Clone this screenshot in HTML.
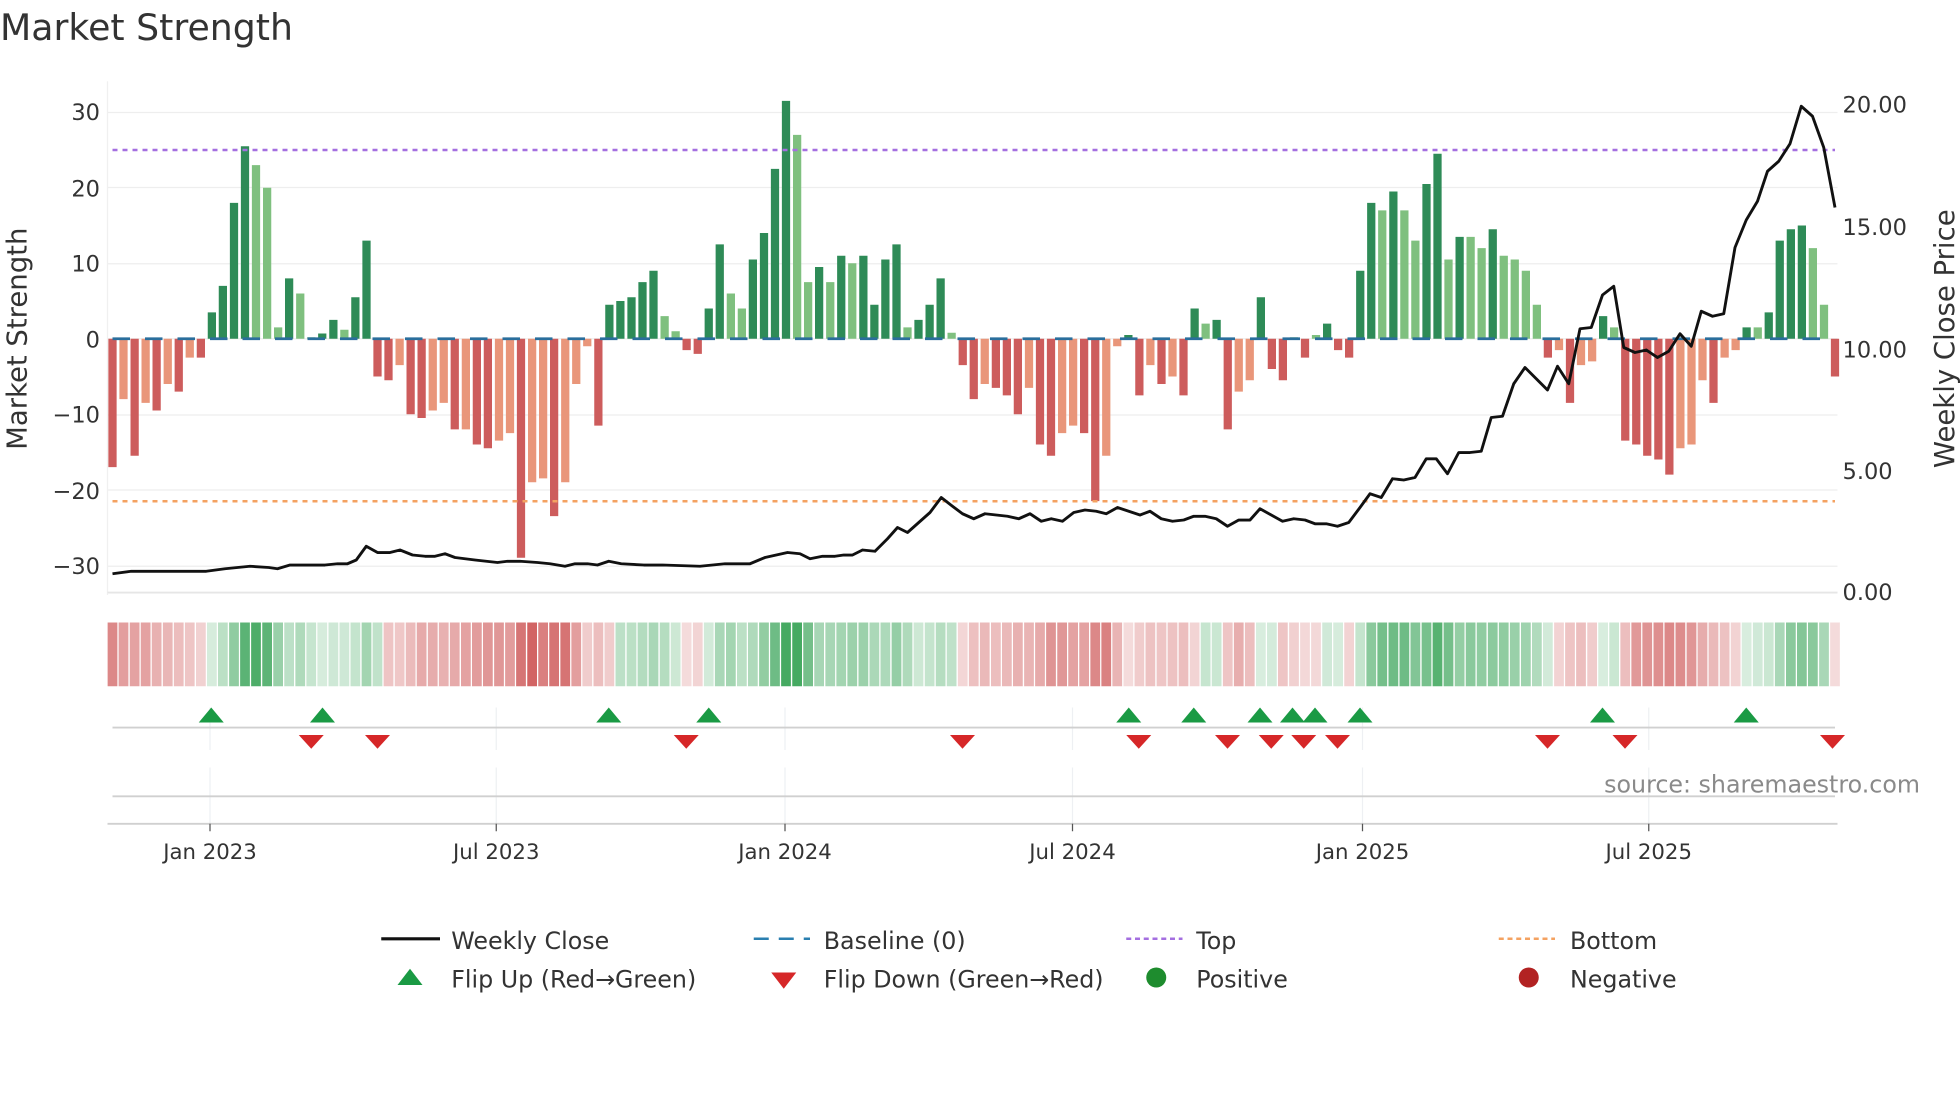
<!DOCTYPE html>
<html><head><meta charset="utf-8"><style>
html,body{margin:0;padding:0;background:#fff;width:1960px;height:1102px;overflow:hidden}
svg{display:block;font-family:"DejaVu Sans","Liberation Sans",sans-serif}
</style></head><body>
<svg id="s" width="1960" height="1102" viewBox="0 0 1568 881.6" xmlns="http://www.w3.org/2000/svg">
<text x="0" y="32" font-size="29" fill="#333">Market Strength</text>
<g id="grid" stroke="#eeeeee" stroke-width="1"></g>
<line x1="86" y1="65" x2="86" y2="476" stroke="#f0f0f0"/>
<line x1="86" y1="474" x2="1470" y2="474" stroke="#e6e6e6" stroke-width="1.5"/>
<g id="bars"></g>
<line x1="90" y1="271" x2="1468" y2="271" stroke="#2a6e9c" stroke-width="2.2" stroke-dasharray="14 12"/>
<line x1="90" y1="120" x2="1468" y2="120" stroke="#a46fe0" stroke-width="2" stroke-dasharray="4 4"/>
<line x1="90" y1="401" x2="1468" y2="401" stroke="#f4a261" stroke-width="2" stroke-dasharray="4 4"/>
<polyline id="price" fill="none" stroke="#111" stroke-width="2.3" stroke-linejoin="round"/>
<g font-size="18" fill="#333" text-anchor="end">
<text x="80" y="96">30</text><text x="80" y="157">20</text><text x="80" y="217">10</text><text x="80" y="278">0</text><text x="80" y="338">−10</text><text x="80" y="399">−20</text><text x="80" y="459">−30</text>
</g>
<g font-size="18" fill="#333">
<text x="1474" y="90">20.00</text><text x="1474" y="188">15.00</text><text x="1474" y="286">10.00</text><text x="1474" y="383">5.00</text><text x="1474" y="480">0.00</text>
</g>
<text transform="translate(21,271) rotate(-90)" font-size="22" fill="#333" text-anchor="middle">Market Strength</text>
<text transform="translate(1563,271) rotate(-90)" font-size="22" fill="#333" text-anchor="middle">Weekly Close Price</text>
<g id="strip"></g>
<g id="vg" stroke="#eef0f3" stroke-width="1"></g>
<line x1="90" y1="582" x2="1468" y2="582" stroke="#d0d0d0" stroke-width="1.5"/>
<line x1="90" y1="637" x2="1468" y2="637" stroke="#d0d0d0" stroke-width="1.5"/>
<line x1="86" y1="659" x2="1470" y2="659" stroke="#d0d0d0" stroke-width="1.5"/>
<g id="mk"></g>
<text x="1536" y="634" font-size="19" fill="#8a8a8a" text-anchor="end">source: sharemaestro.com</text>
<g font-size="17" fill="#333" text-anchor="middle">
<text x="168" y="687">Jan 2023</text><text x="397" y="687">Jul 2023</text><text x="628" y="687">Jan 2024</text><text x="858" y="687">Jul 2024</text><text x="1090" y="687">Jan 2025</text><text x="1319" y="687">Jul 2025</text>
</g>
<g stroke="#555" stroke-width="1"><line x1="168" y1="659" x2="168" y2="665"/><line x1="397" y1="659" x2="397" y2="665"/><line x1="628" y1="659" x2="628" y2="665"/><line x1="858" y1="659" x2="858" y2="665"/><line x1="1090" y1="659" x2="1090" y2="665"/><line x1="1319" y1="659" x2="1319" y2="665"/></g>
<g font-size="19" fill="#333">
<line x1="305" y1="751" x2="352" y2="751" stroke="#111" stroke-width="2.5"/><text x="361" y="759">Weekly Close</text>
<line x1="603" y1="751" x2="648" y2="751" stroke="#2a7fb0" stroke-width="2" stroke-dasharray="12 8"/><text x="659" y="759">Baseline (0)</text>
<line x1="901" y1="751" x2="946" y2="751" stroke="#a46fe0" stroke-width="2" stroke-dasharray="4 3"/><text x="957" y="759">Top</text>
<line x1="1199" y1="751" x2="1244" y2="751" stroke="#f4a261" stroke-width="2" stroke-dasharray="4 3"/><text x="1256" y="759">Bottom</text>
<polygon points="318,788 338,788 328,775" fill="#1a9a44"/><text x="361" y="790">Flip Up (Red→Green)</text>
<polygon points="617,778 637,778 627,791" fill="#d62728"/><text x="659" y="790">Flip Down (Green→Red)</text>
<circle cx="925" cy="782" r="8" fill="#1e8c2e"/><text x="957" y="790">Positive</text>
<circle cx="1223" cy="782" r="8" fill="#b22222"/><text x="1256" y="790">Negative</text>
</g>
</svg>
<script>
var NS="http://www.w3.org/2000/svg";
function el(p,t,a){var e=document.createElementNS(NS,t);for(var k in a)e.setAttribute(k,a[k]);document.getElementById(p).appendChild(e);return e;}
[90,150,211,271,332,392,453].forEach(function(y){el("grid","line",{x1:86,x2:1470,y1:y,y2:y});});
var d=[[-17,1],[-8,0],[-15.5,1],[-8.5,0],[-9.5,1],[-6,0],[-7,1],[-2.5,0],[-2.5,1],[3.5,1],[7,1],[18,1],[25.5,1],[23,0],[20,0],[1.5,0],[8,1],[6,0],[0.2,0],[0.7,1],[2.5,1],[1.2,0],[5.5,1],[13,1],
[-5,1],[-5.5,1],[-3.5,0],[-10,1],[-10.5,1],[-9.5,0],[-8.5,0],[-12,1],[-12,0],[-14,1],[-14.5,1],[-13.5,0],[-12.5,0],[-29,1],[-19,0],[-18.5,0],[-23.5,1],[-19,0],[-6,0],[-1,0],[-11.5,1],
[4.5,1],[5,1],[5.5,1],[7.5,1],[9,1],[3,0],[1,0],[-1.5,1],[-2,1],[4,1],[12.5,1],[6,0],[4,0],[10.5,1],[14,1],[22.5,1],[31.5,1],[27,0],[7.5,0],[9.5,1],[7.5,0],[11,1],[10,0],[11,1],[4.5,1],[10.5,1],[12.5,1],[1.5,0],[2.5,1],[4.5,1],[8,1],[0.8,0],
[-3.5,1],[-8,1],[-6,0],[-6.5,1],[-7.5,1],[-10,1],[-6.5,0],[-14,1],[-15.5,1],[-12.5,0],[-11.5,0],[-12.5,1],[-21.5,1],[-15.5,0],[-1,0],[0.5,1],[-7.5,1],[-3.5,0],[-6,1],[-5,0],[-7.5,1],[4,1],[2,0],[2.5,1],[-12,1],[-7,0],[-5.5,0],[5.5,1],[-4,1],[-5.5,1],[0.2,0],[-2.5,1],[0.5,0],[2,1],[-1.5,1],[-2.5,1],
[9,1],[18,1],[17,0],[19.5,1],[17,0],[13,0],[20.5,1],[24.5,1],[10.5,0],[13.5,1],[13.5,0],[12,0],[14.5,1],[11,0],[10.5,0],[9,0],[4.5,0],[-2.5,1],[-1.5,0],[-8.5,1],[-3.5,0],[-3,0],[3,1],[1.5,0],
[-13.5,1],[-14,1],[-15.5,1],[-16,1],[-18,1],[-14.5,0],[-14,0],[-5.5,0],[-8.5,1],[-2.5,0],[-1.5,0],[1.5,1],[1.5,0],[3.5,1],[13,1],[14.5,1],[15,1],[12,0],[4.5,0],[-5,1]];
var step=(1468-90)/(d.length-1);
d.forEach(function(b,i){
 var x=90+i*step,v=b[0],h=Math.abs(v)*6.04,y=v>=0?271-h:271;
 var c=v>=0?(b[1]?"#2e8b57":"#7fc07f"):(b[1]?"#cd5c5c":"#e9967a");
 el("bars","rect",{x:(x-3.3).toFixed(1),y:y.toFixed(1),width:6.6,height:Math.max(h,0.5).toFixed(1),fill:c});
 var s=(i>0?(d[i-1][0]+v)/2:v), a=Math.min(0.95,0.2+Math.abs(s)/34);
 var sc=s>=0?"rgba(60,165,90,"+a.toFixed(2)+")":"rgba(205,85,85,"+a.toFixed(2)+")";
 el("strip","rect",{x:(x-4.4+0.5).toFixed(1),y:498,width:(step-1).toFixed(1),height:51,fill:sc});
});
var p="90,459 105,457 120,457 165,457 180,455 200,453 215,454 222,455 232,452 260,452 270,451 278,451 285,448 293,437 302,442 312,442 320,440 330,444 340,445 348,445 356,443 364,446 380,448 398,450 406,449 416,449 430,450 440,451 452,453 460,451 470,451 478,452 487,449 497,451 515,452 530,452 560,453 580,451 600,451 612,446 630,442 640,443 648,447 658,445 668,445 675,444 682,444 690,440 700,441 710,431 718,422 726,426 735,418 744,410 753,398 762,405 770,411 779,415 788,411 797,412 806,413 815,415 824,411 833,417 841,415 850,417 859,410 868,408 877,409 885,411 894,406 903,409 912,412 920,409 929,415 938,417 947,416 955,413 964,413 973,415 982,421 991,416 1000,416 1008,407 1017,412 1026,417 1035,415 1044,416 1052,419 1061,419 1070,421 1079,418 1088,406 1096,395 1105,398 1114,383 1123,384 1132,382 1141,367 1149,367 1158,379 1167,362 1176,362 1185,361 1193,334 1202,333 1211,307 1220,294 1229,303 1238,312 1246,293 1255,307 1264,263 1273,262 1282,236 1291,229 1299,278 1308,282 1317,280 1326,286 1335,281 1344,267 1353,277 1361,249 1370,253 1379,251 1388,198 1397,176 1406,161 1414,137 1423,129 1432,115 1441,85 1450,93 1459,118 1468,166";
document.getElementById("price").setAttribute("points",p);
[168,397,628,858,1090,1319].forEach(function(x){el("vg","line",{x1:x,x2:x,y1:566,y2:600});el("vg","line",{x1:x,x2:x,y1:614,y2:659});});
[169,258,487,567,903,955,1008,1034,1052,1088,1282,1397].forEach(function(x){el("mk","polygon",{points:(x-10)+",578 "+(x+10)+",578 "+x+",566",fill:"#1a9a44"});});
[249,302,549,770,911,982,1017,1043,1070,1238,1300,1466].forEach(function(x){el("mk","polygon",{points:(x-10)+",588 "+(x+10)+",588 "+x+",599",fill:"#d62728"});});
</script>
</body></html>
